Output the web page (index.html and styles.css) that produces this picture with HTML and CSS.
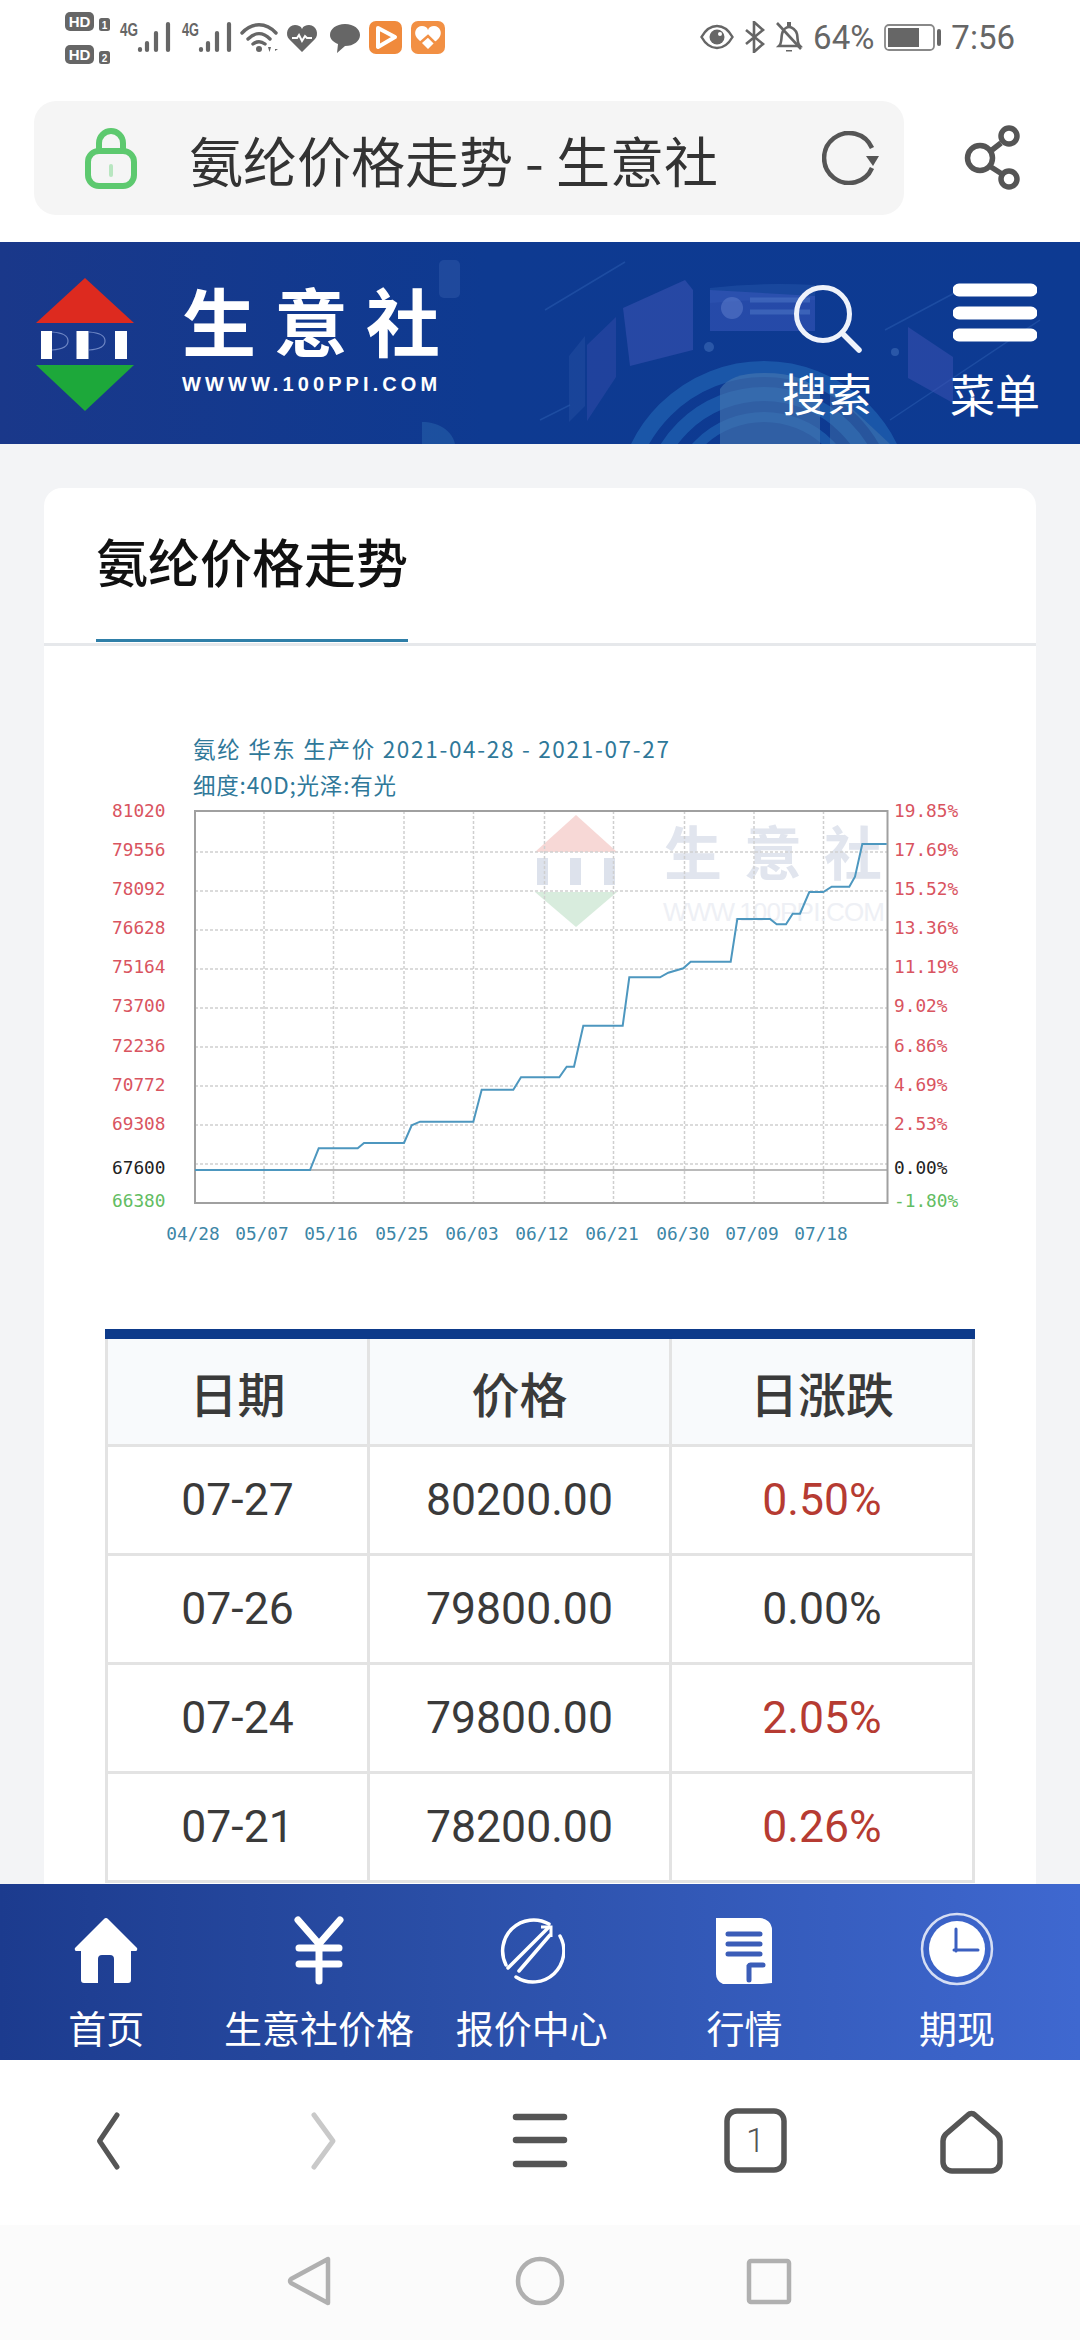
FILE: index.html
```html
<!DOCTYPE html>
<html lang="zh-CN">
<head>
<meta charset="utf-8">
<title>氨纶价格走势 - 生意社</title>
<link rel="stylesheet" href="styles.css">
</head>
<body>
<div class="screen">
  <div class="status">
    <svg class="status-left" width="400" height="70" viewBox="60 0 400 70">
      <rect x="65" y="12" width="29" height="19" rx="5" fill="#666"/><text x="79.5" y="27" class="hd">HD</text>
      <rect x="99" y="18" width="11" height="13" rx="2.5" fill="#666"/><text x="104.5" y="29" class="hdn">1</text>
      <rect x="65" y="45" width="29" height="19" rx="5" fill="#666"/><text x="79.5" y="60" class="hd">HD</text>
      <rect x="99" y="51" width="11" height="13" rx="2.5" fill="#666"/><text x="104.5" y="62" class="hdn">2</text>
      <text x="120" y="36" class="net" textLength="18" lengthAdjust="spacingAndGlyphs">4G</text>
      <g stroke="#666" stroke-width="4.200" stroke-linecap="round" fill="none">
        <path d="M140 49v1M147 43v7M156 33v17M168 24v26"/>
        <path d="M201 49v1M208 43v7M217 33v17M229 24v26"/>
      </g>
      <text x="182" y="36" class="net" textLength="17" lengthAdjust="spacingAndGlyphs">4G</text>
      <g stroke="#666" stroke-width="3.400" fill="none" stroke-linecap="round">
        <path d="M242 33c10-11 24-11 34 0M248 39c7-7 15-7 22 0M253 44c4-3 8-3 12 0"/>
      </g>
      <circle cx="259" cy="49" r="3" fill="#666"/>
      <path d="M268 47h3l-1.500 5zM273 45v7M275 49h3l-3 2z" fill="#666"/>
      <path d="M302 52l-13-13c-4-4-2-14 6-14 3 0 6 1 7 4 1-3 4-4 7-4 8 0 10 10 6 14z" fill="#666"/>
      <path d="M292 38h5l2-3 3 6 3-5 2 2h5" stroke="#fff" stroke-width="2" fill="none"/>
      <path d="M345 24c9 0 15 5 15 11s-6 11-15 11l-8 7 1-9c-5-2-8-5-8-9 0-6 6-11 15-11z" fill="#666"/>
      <rect x="369" y="21" width="33" height="33" rx="7" fill="#f08a3c"/>
      <path d="M378 28l17 9-17 10z" fill="none" stroke="#fff" stroke-width="4" stroke-linejoin="round"/>
      <rect x="411" y="21" width="34" height="33" rx="7" fill="#f29044"/>
      <path d="M428 49l-11-11c-4-5-1-12 5-12 3 0 5 1 6 4 1-3 3-4 6-4 6 0 9 7 5 12z" fill="#fff"/>
      <path d="M414 41l6 2 8-7 7 7 7-2" stroke="#f29044" stroke-width="2.500" fill="none"/>
    </svg>
    <div class="status-right">
      <svg width="34" height="26" viewBox="0 0 34 26"><path d="M1.500 13C6 5 11 2 17 2s11 3 15.500 11C28 21 23 24 17 24S6 21 1.500 13z" fill="none" stroke="#666" stroke-width="2.500"/><circle cx="17" cy="13" r="7.500" fill="#666"/><circle cx="20" cy="10" r="2" fill="#fff"/></svg>
      <svg width="21" height="32" viewBox="0 0 21 32"><path d="M2 9l17 14-9 8V1l9 8L2 23" fill="none" stroke="#666" stroke-width="2.600"/></svg>
      <svg width="28" height="32" viewBox="0 0 28 32"><path d="M4 25c3-3 2-7 3-12 1-4 4-7 7-7s7 3 8 7c1 5 0 9 3 12z" fill="none" stroke="#666" stroke-width="2.600"/><path d="M2 2l24 26" stroke="#666" stroke-width="2.600"/><path d="M11 29h6v1.500h-6zM12 1h4v4h-4z" fill="#666"/></svg>
      <span class="status-text">64%</span>
      <svg width="57" height="27" viewBox="0 0 57 27"><rect x="1" y="1" width="49" height="25" rx="4" fill="none" stroke="#888" stroke-width="1.800"/><rect x="4" y="4" width="31" height="19" fill="#666"/><rect x="53" y="5" width="4" height="17" rx="2" fill="#666"/></svg>
      <span class="status-text">7:56</span>
    </div>
  </div>

  <div class="url-row">
    <div class="url-bar">
      <svg class="lock" width="52" height="61" viewBox="0 0 52 61"><rect x="3" y="23" width="46" height="35" rx="11" fill="none" stroke="#5dc96f" stroke-width="6"/><path d="M14 23v-8a12 12 0 0 1 24 0v8" fill="none" stroke="#5dc96f" stroke-width="6"/><rect x="24" y="36" width="4" height="13" rx="2" fill="#b8e6c0"/></svg>
      <span class="url-text">氨纶价格走势 - 生意社</span>
      <svg class="refresh" width="60" height="54" viewBox="0 0 60 54"><path d="M50 37A25 25 0 1 1 50 17" fill="none" stroke="#555" stroke-width="4.500"/><path d="M57 26H44l7 10z" fill="#555" transform="translate(0 -1)"/></svg>
    </div>
    <svg class="share" width="60" height="66" viewBox="0 0 60 66"><circle cx="18" cy="33" r="12.500" fill="none" stroke="#555" stroke-width="5.500"/><circle cx="47" cy="11" r="8" fill="none" stroke="#555" stroke-width="5.500"/><circle cx="47" cy="54" r="8" fill="none" stroke="#555" stroke-width="5.500"/><path d="M30 25l9-7M29 42l11 7" stroke="#555" stroke-width="5.500"/></svg>
  </div>

  <header class="site-header">
    <svg class="header-art" width="1080" height="202" viewBox="0 242 1080 202" aria-hidden="true">
      <rect x="439" y="260" width="21" height="38" rx="5" fill="#3f68b4" opacity=".35"/>
      <path d="M422 444v-22c16 0 30 8 33 22z" fill="#2a66ad" opacity=".5"/>
      <path d="M545 310L625 262M540 420l30-15M1040 320L890 420M885 330L960 290" stroke="#3a6fc0" stroke-width="1.500" opacity=".35"/>
      <path d="M569 356l16-20v70l-16 16z" fill="#2f58a8" opacity=".35"/>
      <path d="M587 345l29-28v60l-29 44z" fill="#3d4fb0" opacity=".4"/>
      <path d="M623 308l62-28 8 10v60l-63 16z" fill="#3f55b8" opacity=".5"/>
      <path d="M710 288q50-6 105-3v15q-50-2-105 3z" fill="#2a5cae" opacity=".4"/>
      <path d="M710 290l105 6v35H710z" fill="#3a58bc" opacity=".55"/>
      <circle cx="732" cy="308" r="11" fill="#5878c8" opacity=".6"/>
      <path d="M750 300h60M750 312h60" stroke="#4a72c4" stroke-width="5" opacity=".6"/>
      <path d="M908 327l45 30v46l-45-25z" fill="#3d52b4" opacity=".5"/>
      <circle cx="709" cy="347" r="5" fill="#3d6ab8" opacity=".6"/><circle cx="895" cy="352" r="4" fill="#3d6ab8" opacity=".6"/>
      <g fill="none" stroke="#2369b8" opacity=".6">
        <circle cx="764" cy="509" r="140" stroke-width="16"/>
        <circle cx="764" cy="509" r="115" stroke-width="14"/>
        <circle cx="764" cy="509" r="92" stroke-width="10"/>
      </g>
      <path d="M720 444v-55q10-16 45-16 40 0 55 20l0 51z" fill="#4878b0" opacity=".6"/>
      <path d="M830 388l60 56h-60z" fill="#4f7fb0" opacity=".4"/>
    </svg>
    <svg class="logo" width="100" height="134" viewBox="0 0 100 134"><path d="M50 0l49 45H1z" fill="#dd2a1f"/><path d="M1 87h98L50 133z" fill="#1da83a"/><g fill="#fff"><rect x="6" y="53" width="11" height="28"/><rect x="41.500" y="53" width="12" height="28"/><rect x="80" y="53" width="12" height="28"/></g><path d="M17 54q16 1 16 9t-16 9M54 54q16 1 16 9t-16 9" fill="none" stroke="#6d86c4" stroke-width="1.200"/></svg>
    <div class="brand">
      <div class="brand-name">生意社</div>
      <div class="brand-url">WWWW.100PPI.COM</div>
    </div>
    <div class="head-actions">
      <div class="head-action head-search">
        <svg width="70" height="70" viewBox="0 0 70 70"><circle cx="31" cy="31" r="26.500" fill="none" stroke="#eef2fb" stroke-width="5"/><path d="M50 50l17 17" stroke="#eef2fb" stroke-width="5.500" stroke-linecap="round"/></svg>
        <span>搜索</span>
      </div>
      <div class="head-action head-menu">
        <svg width="84" height="60" viewBox="0 0 84 60"><path d="M6 7h72M6 30h72M6 52h72" stroke="#fff" stroke-width="13" stroke-linecap="round"/></svg>
        <span>菜单</span>
      </div>
    </div>
  </header>

  <main class="content">
    <section class="card">
      <div class="card-head"><h1 class="card-title">氨纶价格走势</h1></div>
      <svg class="chart" width="880" height="540" viewBox="100 716 880 540">
        <g class="wm">
          <path d="M576 815l41 37h-82z" fill="#f7d8d6"/>
          <path d="M535 892h82l-41 35z" fill="#d8ecdd"/>
          <path d="M537 858h11v27h-11zM570 858h11v27h-11zM604 858h11v27h-11z" fill="#dde2ec"/>
          <text x="664 744 824" y="875" class="wm-big">生意社</text>
          <text x="663" y="921" class="wm-url" textLength="222">WWW.100PPI.COM</text>
        </g>
        <path class="grid" d="M195 852H887M195 891H887M195 930H887M195 969H887M195 1008H887M195 1047H887M195 1086H887M195 1125H887M195 1164H887M264 811V1203M333.500 811V1203M404 811V1203M473.500 811V1203M544.500 811V1203M613.500 811V1203M684.500 811V1203M754 811V1203M823.500 811V1203"/>
        <path class="baseline" d="M195 1170H887"/>
        <rect class="frame" x="195" y="811" width="692.500" height="392"/>
        <polyline class="trend" points="195,1170 310,1170 318.700,1148.300 357.700,1148.300 364,1143 404,1143 411.700,1125.300 420,1121.700 473.300,1121.700 481.700,1089.700 513.300,1089.700 521,1077.300 559.300,1077.300 566.700,1066.700 574,1066.700 583.300,1025.700 622.700,1025.700 629.300,977.300 660,977.300 668.300,972.700 683.300,968.300 690.700,961.700 730.700,961.700 737.300,919 770,919 776.700,924.300 786,924.300 792.700,913.700 800,913.700 809.300,892 823.300,892 831.700,886.700 849.300,886.700 855,876.700 862.300,844 886.700,844"/>
        <text class="chart-title" x="193" y="758" textLength="476">氨纶 华东 生产价 2021-04-28 - 2021-07-27</text>
        <text class="chart-title" x="193" y="794" textLength="203">细度:40D;光泽:有光</text>
        <g class="axis up">
          <text x="112" y="817">81020</text><text x="112" y="856">79556</text><text x="112" y="895">78092</text><text x="112" y="934">76628</text><text x="112" y="973">75164</text><text x="112" y="1012">73700</text><text x="112" y="1052">72236</text><text x="112" y="1091">70772</text><text x="112" y="1130">69308</text>
          <text x="894" y="817">19.85%</text><text x="894" y="856">17.69%</text><text x="894" y="895">15.52%</text><text x="894" y="934">13.36%</text><text x="894" y="973">11.19%</text><text x="894" y="1012">9.02%</text><text x="894" y="1052">6.86%</text><text x="894" y="1091">4.69%</text><text x="894" y="1130">2.53%</text>
        </g>
        <g class="axis zero"><text x="112" y="1174">67600</text><text x="894" y="1174">0.00%</text></g>
        <g class="axis down"><text x="112" y="1207">66380</text><text x="894" y="1207">-1.80%</text></g>
        <g class="axis dates">
          <text x="193" y="1240">04/28</text><text x="262" y="1240">05/07</text><text x="331" y="1240">05/16</text><text x="402" y="1240">05/25</text><text x="472" y="1240">06/03</text><text x="542" y="1240">06/12</text><text x="612" y="1240">06/21</text><text x="683" y="1240">06/30</text><text x="752" y="1240">07/09</text><text x="821" y="1240">07/18</text>
        </g>
      </svg>
      <table class="prices">
        <thead>
          <tr><th class="col-date">日期</th><th class="col-price">价格</th><th>日涨跌</th></tr>
        </thead>
        <tbody>
          <tr><td>07-27</td><td>80200.00</td><td class="rise">0.50%</td></tr>
          <tr><td>07-26</td><td>79800.00</td><td>0.00%</td></tr>
          <tr><td>07-24</td><td>79800.00</td><td class="rise">2.05%</td></tr>
          <tr><td>07-21</td><td>78200.00</td><td class="rise">0.26%</td></tr>
        </tbody>
      </table>
    </section>
  </main>

  <nav class="site-nav">
    <div class="nav-item">
      <svg width="66" height="70" viewBox="0 0 66 70"><path d="M33 3a3 3 0 0 1 2 1l29 29a2 2 0 0 1-2 3h-4v29a3 3 0 0 1-3 3H41V44a4 4 0 0 0-4-4h-8a4 4 0 0 0-4 4v24H11a3 3 0 0 1-3-3V36H4a2 2 0 0 1-2-3L31 4a3 3 0 0 1 2-1z" fill="#fff"/></svg>
      <span>首页</span>
    </div>
    <div class="nav-item">
      <svg width="66" height="70" viewBox="0 0 66 70"><path d="M12 5l21 24L54 5M13 33h40M13 49h40M33 29v37" fill="none" stroke="#fff" stroke-width="7" stroke-linecap="round"/></svg>
      <span>生意社价格</span>
    </div>
    <div class="nav-item">
      <svg width="66" height="70" viewBox="0 0 66 70"><path d="M7 50A31 31 0 0 1 50 9M61 21A31 31 0 0 1 17 62" fill="none" stroke="#fff" stroke-width="3.500" stroke-linecap="round"/><path d="M9 53L50 12M51 20L20 56" fill="none" stroke="#fff" stroke-width="3.500" stroke-linecap="round"/><path d="M42 12h10v10" fill="none" stroke="#fff" stroke-width="3"/></svg>
      <span>报价中心</span>
    </div>
    <div class="nav-item">
      <svg width="66" height="70" viewBox="0 0 66 70"><path d="M5 3h44a12 12 0 0 1 12 12v53l-10 1H12A11 11 0 0 1 5 58z" fill="#fff"/><path d="M17 19h32M17 29h32M17 39h32M38 65V51a2 2 0 0 1 2-1h12" fill="none" stroke="#3b5db8" stroke-width="5" stroke-linecap="round"/></svg>
      <span>行情</span>
    </div>
    <div class="nav-item nav-clock">
      <svg width="74" height="74" viewBox="0 0 74 74"><circle cx="37" cy="37" r="35" fill="none" stroke="#d6def4" stroke-width="2.500"/><circle cx="37" cy="37" r="28" fill="#fff"/><path d="M36 17v22M34 38h24" stroke="#3b5fc0" stroke-width="3" stroke-linecap="round"/></svg>
      <span>期现</span>
    </div>
  </nav>

  <div class="toolbar">
    <svg width="1080" height="165" viewBox="0 2060 1080 165">
      <path d="M117 2115l-17.500 26 17.500 26" class="tb"/>
      <path d="M314 2115l19 26-19 26" class="tb tb-off"/>
      <path d="M516 2117h48M516 2140h48M516 2164h48" class="tb tb-bars"/>
      <rect x="727" y="2111" width="57" height="59" rx="10" class="tb tb-box"/>
      <text x="755.500" y="2152" class="tab-count">1</text>
      <path d="M968 2115a5 5 0 0 1 7 0l22 19a10 10 0 0 1 3 7v21a9 9 0 0 1-9 9h-39a9 9 0 0 1-9-9v-21a10 10 0 0 1 3-7z" class="tb tb-box"/>
    </svg>
  </div>
  <div class="sysnav">
    <svg width="1080" height="115" viewBox="0 2225 1080 115">
      <path d="M328 2259v44l-37-20a2.500 2.500 0 0 1 0-4z" class="sn"/>
      <circle cx="540" cy="2281" r="22" class="sn"/>
      <rect x="749" y="2261" width="40" height="41" rx="2" class="sn"/>
    </svg>
  </div>
</div>
</body>
</html>
```

FILE: styles.css
```css
* { box-sizing: border-box; }
html, body { margin: 0; padding: 0; }
body {
  width: 1080px;
  height: 2340px;
  overflow: hidden;
  background: #fff;
  font-family: "Noto Sans CJK SC", "Noto Sans", sans-serif;
  color: #333;
}
svg { display: block; flex: none; }
.screen { display: flex; flex-direction: column; width: 1080px; height: 2340px; overflow: hidden; }

.status { display: flex; justify-content: space-between; height: 101px; padding: 0 65px 0 60px; flex: none; }
.hd { font: 700 15px "Liberation Sans", sans-serif; fill: #fff; text-anchor: middle; }
.hdn { font: 700 10px "Liberation Sans", sans-serif; fill: #fff; text-anchor: middle; }
.net { font: 700 19px "Liberation Sans", sans-serif; fill: #666; }
.status-right { display: flex; align-items: center; gap: 10px; height: 74px; }
.status-text { font: 400 33px Roboto, sans-serif; color: #666; }

.url-row { display: flex; align-items: flex-start; height: 141px; padding-left: 34px; flex: none; }
.url-bar { display: flex; align-items: center; width: 870px; height: 114px; padding-left: 51px; background: #f5f5f5; border-radius: 22px; }
.url-text { margin-left: 52px; font-size: 54px; line-height: 1; color: #333; white-space: nowrap; margin-top: 4px; }
.refresh { margin-left: auto; margin-right: 22px; }
.share { margin: 24px 0 0 58px; }

.site-header { position: relative; display: flex; align-items: flex-start; height: 202px; flex: none; background: linear-gradient(90deg, #1a388a 0%, #0e3a91 45%, #0d3a92 100%); color: #fff; overflow: hidden; }
.header-art { position: absolute; left: 0; top: 0; }
.logo { position: relative; margin: 36px 0 0 35px; }
.brand { position: relative; margin: 32px 0 0 47px; }
.brand-name { font-size: 74px; font-weight: 700; line-height: 90px; letter-spacing: 18px; white-space: nowrap; margin-left: 0; }
.brand-url { font: 700 20px/24px "Liberation Sans", sans-serif; letter-spacing: 4.100px; margin-top: 8px; white-space: nowrap; }
.head-actions { position: relative; margin-left: auto; display: flex; padding-right: 40px; }
.head-action { display: flex; flex-direction: column; align-items: center; }
.head-action span { font-size: 45px; line-height: 50px; white-space: nowrap; }
.head-search { margin-right: 78px; padding-top: 41px; }
.head-search span { margin-top: 15px; }
.head-menu { padding-top: 41px; }
.head-menu span { margin-top: 26px; }

.content { flex: 1; min-height: 0; overflow: hidden; background: #f3f4f6; padding: 44px 44px 0; }
.card { background: #fff; border-radius: 18px 18px 0 0; height: 1500px; }
.card-head { height: 158px; padding-left: 52px; border-bottom: 3px solid #e6e8eb; }
.card-title { display: inline-block; margin: 0; height: 154px; padding-top: 39px; width: 312px; font-size: 52px; font-weight: 500; line-height: 68px; color: #111; white-space: nowrap; border-bottom: 3px solid #2f7fa8; }
.chart { margin: 70px 0 0 56px; }
.wm-big { font-size: 58px; font-weight: 700; fill: #e1e5ee; }
.wm-url { font: 400 26px "Liberation Sans", sans-serif; fill: #eef0f5; }
.grid { fill: none; stroke: #cfcfcf; stroke-width: 1.500; stroke-dasharray: 3 2; }
.baseline { fill: none; stroke: #a3a3a3; stroke-width: 1.500; }
.frame { fill: none; stroke: #a0a0a0; stroke-width: 2; }
.trend { fill: none; stroke: #4d97bf; stroke-width: 2; }
.chart-title { font-size: 22.500px; fill: #2f7899; }
.axis { font: 400 17.800px "DejaVu Sans Mono", monospace; }
.up { fill: #d9545f; }
.zero { fill: #222; }
.down { fill: #62bd62; }
.dates { fill: #3d86a6; text-anchor: middle; }

.prices { width: 870px; margin: 73px 0 0 61px; border-collapse: collapse; table-layout: fixed; border-top: 10px solid #0d3a8a; }
.prices th, .prices td { border: 3px solid #e3e3e3; height: 109px; padding: 0; text-align: center; color: #3a3a3a; }
.prices tr:first-child th { border-top: 0; height: 111.500px; }
.prices th { font-size: 48px; font-weight: 500; background: #f8fafc; color: #3a3a3a; }
.prices td { font: 400 44.500px Roboto, sans-serif; }
.prices .rise { color: #b63b32; }
.col-date { width: 262px; }
.col-price { width: 302px; }

.site-nav { display: grid; grid-template-columns: repeat(5, 212.700px); height: 176px; flex: none; padding-top: 31px; background: linear-gradient(90deg, #1c3b8e 0%, #2a4ea6 40%, #3f68d0 100%); color: #fff; }
.nav-item { display: flex; flex-direction: column; align-items: center; }
.nav-item span { margin-top: 18px; font-size: 38px; line-height: 48px; white-space: nowrap; }
.nav-clock { margin-top: -3px; }
.nav-clock span { margin-top: 17px; }

.toolbar { height: 165px; flex: none; background: #fff; }
.tb { fill: none; stroke: #555; stroke-width: 5; stroke-linecap: round; stroke-linejoin: round; }
.tb-off { stroke: #c9c9c9; }
.tb-bars { stroke-width: 6.500; }
.tb-box { stroke-width: 5.500; }
.tab-count { font: 300 34px Roboto, sans-serif; fill: #555; text-anchor: middle; }
.sysnav { height: 115px; flex: none; background: #fbfbfb; }
.sn { fill: none; stroke: #b0b0b0; stroke-width: 4.500; stroke-linejoin: round; }
```
